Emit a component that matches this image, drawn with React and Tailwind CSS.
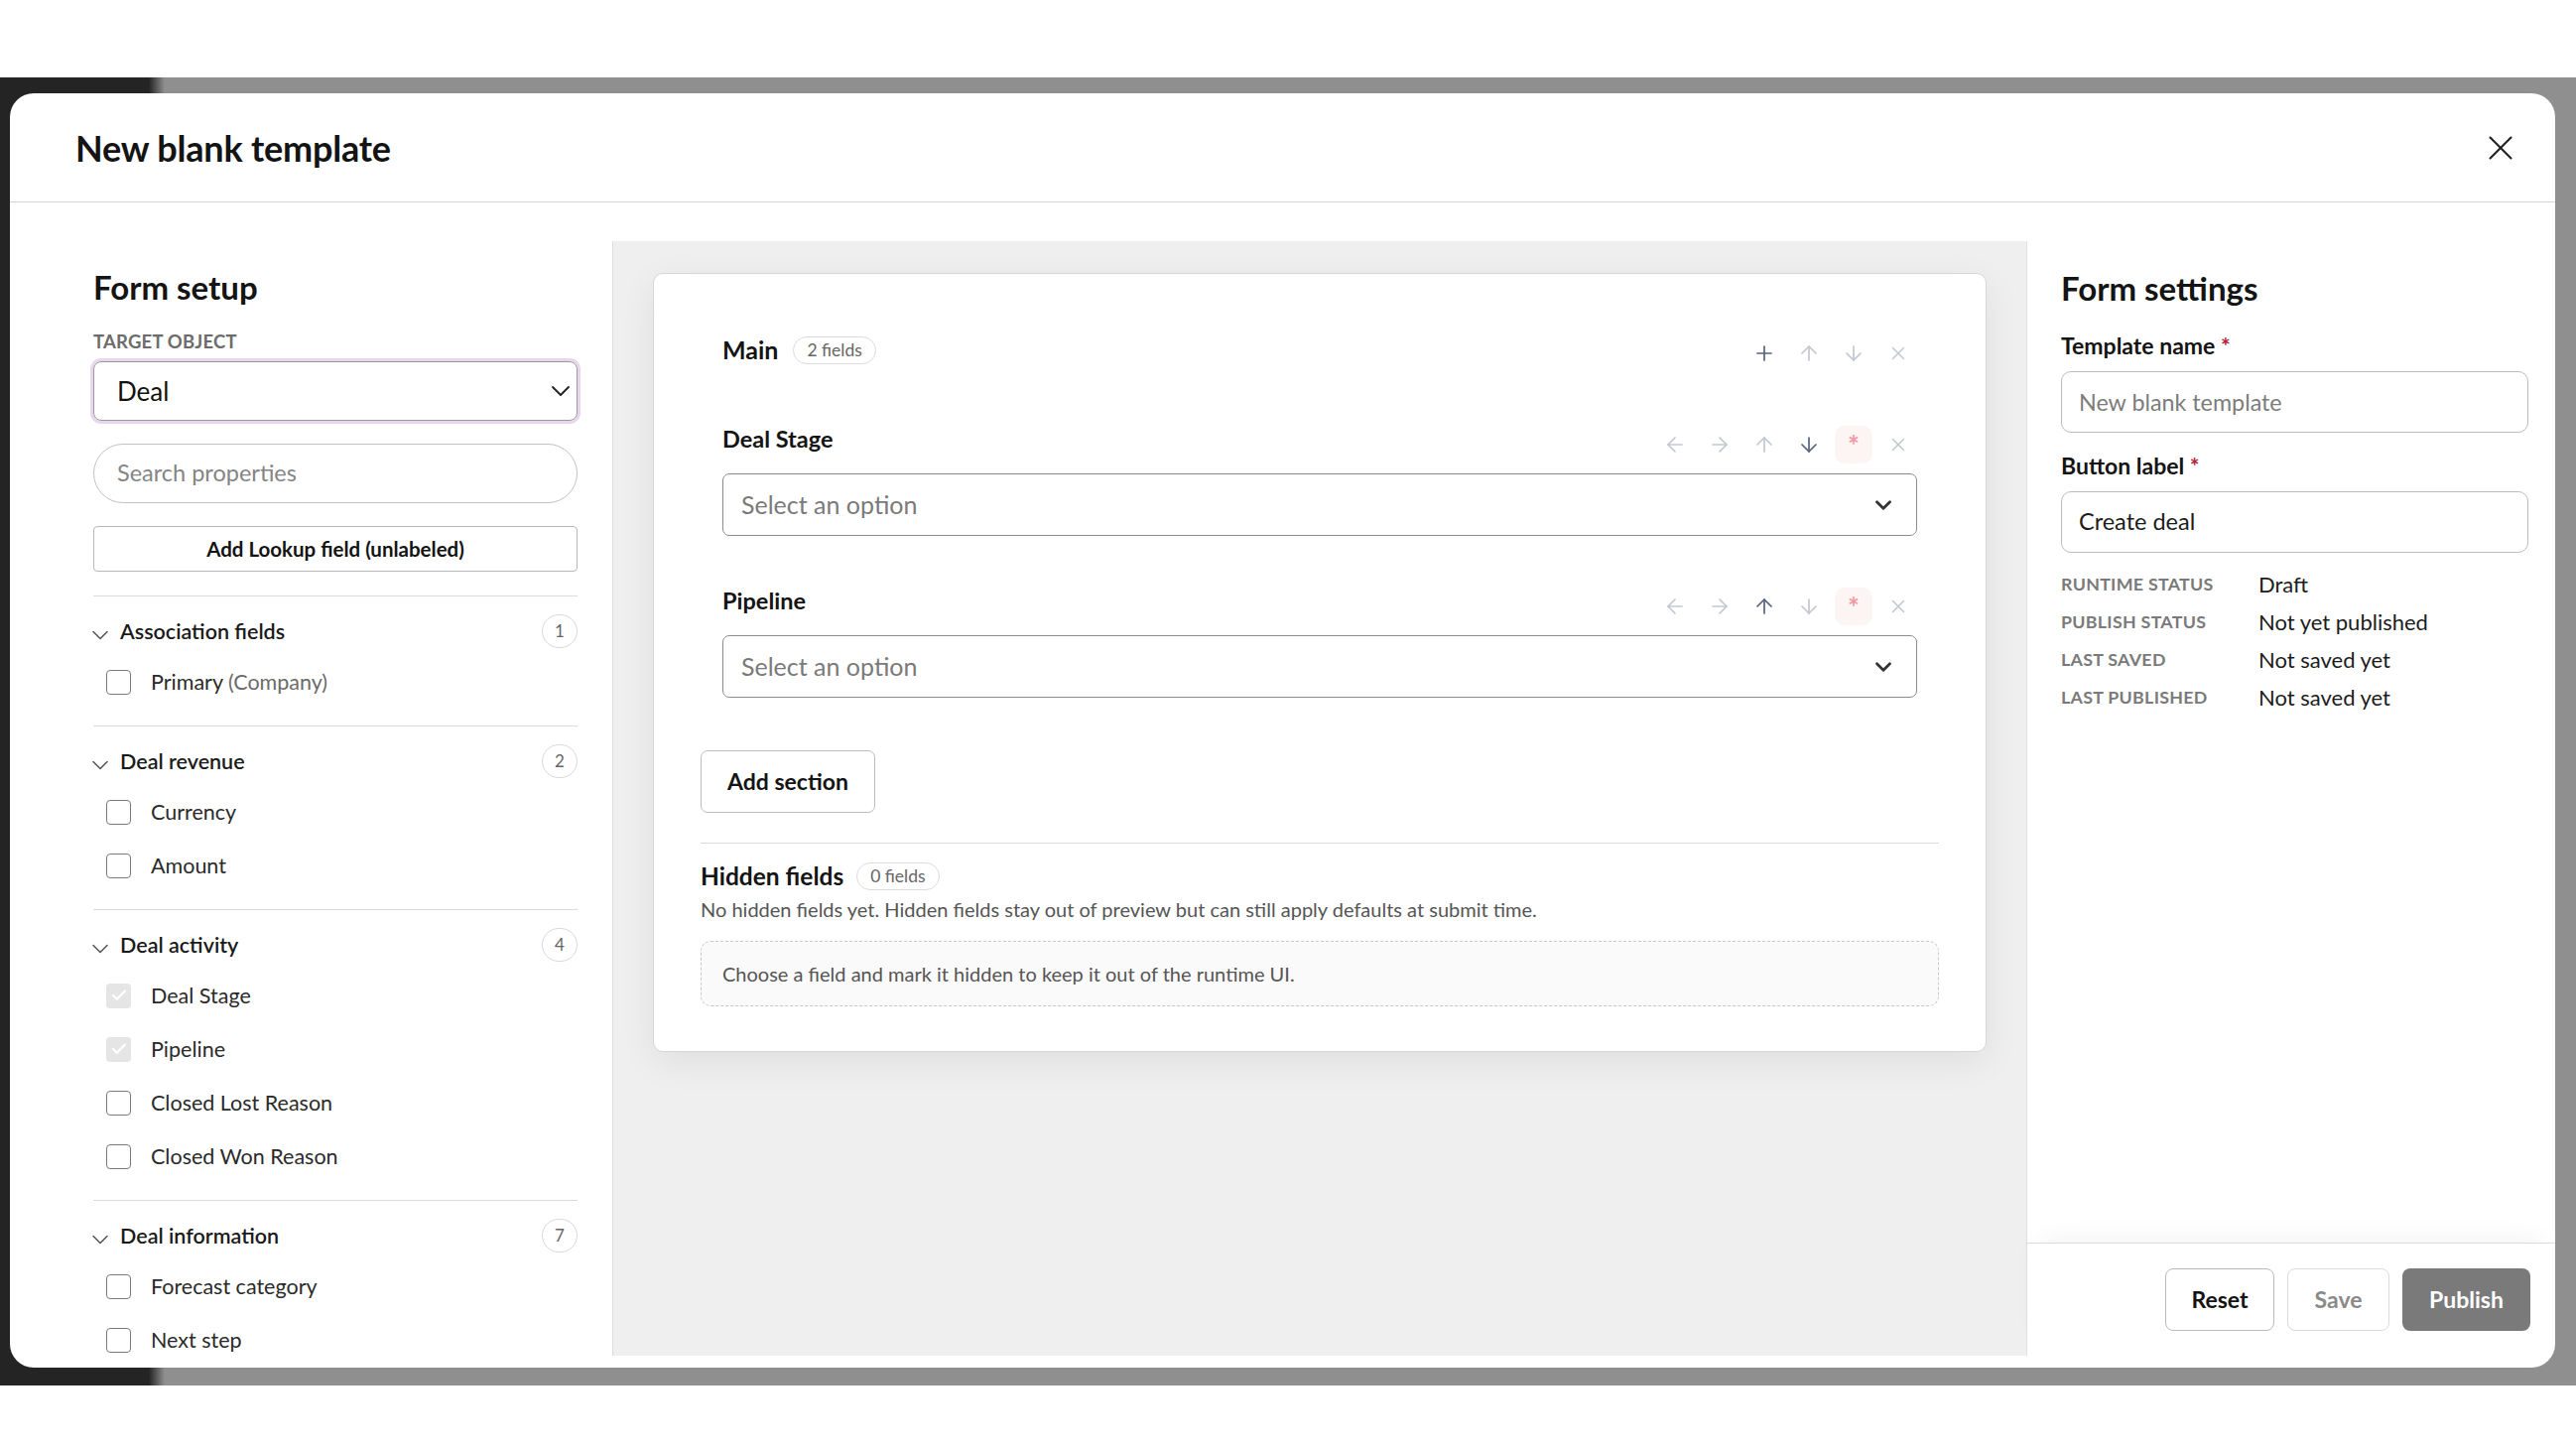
import React from 'react';
import { ArrowLeft, ArrowRight, ArrowUp, ArrowDown, Plus, X, ChevronDown, Check } from 'lucide-react';

const groups = [
  { title: 'Association fields', count: 1, items: [{ label: 'Primary', note: '(Company)' }] },
  { title: 'Deal revenue', count: 2, items: [{ label: 'Currency' }, { label: 'Amount' }] },
  {
    title: 'Deal activity',
    count: 4,
    items: [
      { label: 'Deal Stage', locked: true },
      { label: 'Pipeline', locked: true },
      { label: 'Closed Lost Reason' },
      { label: 'Closed Won Reason' },
    ],
  },
  {
    title: 'Deal information',
    count: 7,
    items: [
      { label: 'Forecast category' },
      { label: 'Next step' },
      { label: 'Deal type' },
      { label: 'Priority' },
      { label: 'Close date' },
      { label: 'Deal owner' },
      { label: 'Deal description' },
    ],
  },
];

const statusRows = [
  ['Runtime status', 'Draft'],
  ['Publish status', 'Not yet published'],
  ['Last saved', 'Not saved yet'],
  ['Last published', 'Not saved yet'],
];

const light = 'text-[#c2c7d1]';
const dark = 'text-[#55627f]';

const IconBtn = ({ children, tone = light }) => (
  <span className={`w-[38px] h-[38px] flex items-center justify-center ${tone}`}>{children}</span>
);

const RequiredBtn = () => (
  <span className="w-[38px] h-[38px] flex items-start justify-center rounded-[10px] bg-[#fdf4f4] text-[#ef9ca4] text-[28px] font-bold leading-[38px]">
    *
  </span>
);

const Pill = ({ children }) => (
  <span className="h-[28px] px-[13px] flex items-center rounded-full border border-[#dcdcdc] text-[17.5px] text-[#666]">
    {children}
  </span>
);

const FieldRow = ({ label, upDark, downDark, className }) => (
  <div className={className}>
    <div className="h-[38px] flex items-center justify-between">
      <span className="text-[23.5px] font-bold text-[#141414] mb-[10px]">{label}</span>
      <div className="flex gap-[7px]">
        <IconBtn><ArrowLeft size={24} strokeWidth={1.7} /></IconBtn>
        <IconBtn><ArrowRight size={24} strokeWidth={1.7} /></IconBtn>
        <IconBtn tone={upDark ? dark : light}><ArrowUp size={24} strokeWidth={1.7} /></IconBtn>
        <IconBtn tone={downDark ? dark : light}><ArrowDown size={24} strokeWidth={1.7} /></IconBtn>
        <RequiredBtn />
        <IconBtn><X size={22} strokeWidth={1.7} /></IconBtn>
      </div>
    </div>
    <div className="mt-[10px] h-[63px] border border-[#8c8c8c] rounded-[7px] flex items-center justify-between pl-[18px] pr-[20px]">
      <span className="text-[25px] text-[#7a7a7a]">Select an option</span>
      <ChevronDown size={26} strokeWidth={2.6} className="text-[#333]" />
    </div>
  </div>
);

const Checkbox = ({ locked }) =>
  locked ? (
    <span className="w-[25px] h-[25px] rounded-[4px] bg-[#e5e5e5] flex items-center justify-center text-white">
      <Check size={18} strokeWidth={3} />
    </span>
  ) : (
    <span className="w-[25px] h-[25px] rounded-[4px] border-[1.5px] border-[#7a7a7a] bg-white" />
  );

export default function App() {
  return (
    <div className="w-[2596px] h-[1460px] bg-white pt-[78px] overflow-hidden font-[family-name:Lato,sans-serif] text-[#141414]">
      <div className="h-[1318px] pt-[16px] bg-[linear-gradient(90deg,#242424_150px,#8f8f8f_166px)]">
        <div className="ml-[10px] w-[2565px] h-[1284px] bg-white rounded-[24px] flex flex-col overflow-hidden">
          {/* Header */}
          <div className="h-[110px] shrink-0 border-b border-[#d4d4d4] flex items-center justify-between pl-[66px] pr-[34px]">
            <h1 className="text-[36px] font-bold tracking-[-0.2px]">New blank template</h1>
            <X size={42} strokeWidth={1.2} className="text-[#222]" />
          </div>

          {/* Body */}
          <div className="flex-1 min-h-0 flex pt-[39px] pb-[12px]">
            {/* Form setup */}
            <div className="w-[608px] shrink-0 border-r border-[#dcdcdc] overflow-hidden pl-[84px] pr-[35px] pt-[28px]">
              <h2 className="text-[33px] font-bold leading-[36px]">Form setup</h2>
              <div className="mt-[27px] text-[18.5px] font-bold text-[#6c6c6c] leading-[20px] tracking-[0.2px]">TARGET OBJECT</div>
              <div className="mt-[10px] h-[60px] rounded-[8px] border border-[#9a9a9a] ring-[3px] ring-[#e7d6ee] flex items-center justify-between pl-[23px] pr-0">
                <span className="text-[26px] text-[#111]">Deal</span>
                <ChevronDown size={32} strokeWidth={1.4} className="text-[#222]" />
              </div>
              <div className="mt-[23px] h-[60px] rounded-full border border-[#c2c2c2] flex items-center pl-[23px]">
                <span className="text-[23.5px] text-[#858585]">Search properties</span>
              </div>
              <div className="mt-[23px] h-[46px] rounded-[4px] border border-[#b8b8b8] flex items-center justify-center">
                <span className="text-[20.5px] font-bold text-[#141414]">Add Lookup field (unlabeled)</span>
              </div>

              <div className="mt-[24px]">
                {groups.map((g) => (
                  <div key={g.title} className="border-t border-[#dadada]">
                    <div className="mt-[17px] h-[36px] flex items-center justify-between">
                      <div className="flex items-center">
                        <ChevronDown size={28} strokeWidth={1.3} className="text-[#555] mt-[8px] -ml-[7px]" />
                        <span className="ml-[6px] text-[21.5px] font-semibold text-[#1a1a1a]">{g.title}</span>
                      </div>
                      <span className="w-[36px] h-[34px] rounded-full border border-[#d9d9d9] flex items-center justify-center text-[17px] text-[#666]">
                        {g.count}
                      </span>
                    </div>
                    <div className="mt-[6px] pb-[17px]">
                      {g.items.map((it) => (
                        <div key={it.label} className="h-[54px] flex items-center pl-[13px]">
                          <Checkbox locked={it.locked} />
                          <span className="ml-[20px] text-[21.5px] text-[#2a2a2a]">
                            {it.label}
                            {it.note && <span className="text-[#6a6a6a]"> {it.note}</span>}
                          </span>
                        </div>
                      ))}
                    </div>
                  </div>
                ))}
              </div>
            </div>

            {/* Canvas */}
            <div className="flex-1 min-w-0 bg-[#efefef] px-[40px] pt-[32px] overflow-hidden">
              <div className="bg-white border border-[#d6d6d6] rounded-[10px] shadow-[0_10px_36px_rgba(0,0,0,0.07)] px-[47px] pt-[58px] pb-[45px]">
                <div className="px-[22px]">
                  <div className="h-[38px] flex items-center justify-between">
                    <div className="flex items-center gap-[15px]">
                      <span className="text-[25px] font-bold">Main</span>
                      <Pill>2 fields</Pill>
                    </div>
                    <div className="flex gap-[7px] mt-[6px]">
                      <IconBtn tone={dark}><Plus size={24} strokeWidth={1.7} /></IconBtn>
                      <IconBtn><ArrowUp size={24} strokeWidth={1.7} /></IconBtn>
                      <IconBtn><ArrowDown size={24} strokeWidth={1.7} /></IconBtn>
                      <IconBtn><X size={22} strokeWidth={1.7} /></IconBtn>
                    </div>
                  </div>
                  <FieldRow label="Deal Stage" downDark className="mt-[57px]" />
                  <FieldRow label="Pipeline" upDark className="mt-[52px]" />
                </div>

                <button className="mt-[53px] h-[63px] px-[26px] rounded-[7px] border border-[#bdbdbd] text-[23px] font-bold text-[#141414]">
                  Add section
                </button>

                <div className="mt-[30px] border-t border-[#d9d9d9]" />

                <div className="mt-[18px] h-[30px] flex items-center gap-[13px]">
                  <span className="text-[24.5px] font-bold">Hidden fields</span>
                  <Pill>0 fields</Pill>
                </div>
                <p className="mt-[6px] text-[20px] leading-[24px] text-[#555]">
                  No hidden fields yet. Hidden fields stay out of preview but can still apply defaults at submit time.
                </p>
                <div className="mt-[20px] h-[66px] rounded-[10px] border border-dashed border-[#c8c8c8] bg-[#fafafa] flex items-center px-[21px]">
                  <span className="text-[20px] text-[#555]">Choose a field and mark it hidden to keep it out of the runtime UI.</span>
                </div>
              </div>
            </div>

            {/* Form settings */}
            <div className="w-[533px] shrink-0 border-l border-[#e0e0e0] flex flex-col">
              <div className="flex-1 pl-[34px] pr-[27px] pt-[29px]">
                <h2 className="text-[33px] font-bold leading-[36px]">Form settings</h2>
                <div className="mt-[27px] text-[23px] font-bold leading-[26px]">
                  Template name <span className="text-[#b3203c]">*</span>
                </div>
                <div className="mt-[13px] h-[62px] rounded-[10px] border border-[#bcbcbc] flex items-center pl-[17px]">
                  <span className="text-[23.3px] text-[#7c7c7c]">New blank template</span>
                </div>
                <div className="mt-[20px] text-[23px] font-bold leading-[26px]">
                  Button label <span className="text-[#b3203c]">*</span>
                </div>
                <div className="mt-[13px] h-[62px] rounded-[10px] border border-[#bcbcbc] flex items-center pl-[17px]">
                  <span className="text-[23.5px] text-[#1c1c1c]">Create deal</span>
                </div>
                <div className="mt-[12px]">
                  {statusRows.map(([k, v]) => (
                    <div key={k} className="h-[38px] flex items-center">
                      <span className="w-[199px] shrink-0 text-[17.8px] font-bold uppercase tracking-[0.3px] text-[#7a7a7a]">{k}</span>
                      <span className="text-[22px] text-[#1c1c1c]">{v}</span>
                    </div>
                  ))}
                </div>
              </div>
              <div className="h-[114px] shrink-0 border-t border-[#dcdcdc] shadow-[0_-14px_28px_-14px_rgba(0,0,0,0.07)] flex items-center justify-end gap-[13px] pr-[25px]">
                <button className="h-[63px] w-[110px] rounded-[8px] border border-[#bababa] text-[23px] font-bold text-[#141414]">Reset</button>
                <button className="h-[63px] w-[103px] rounded-[8px] border border-[#dadada] text-[23px] font-bold text-[#8a8a8a]">Save</button>
                <button className="h-[63px] w-[129px] rounded-[8px] bg-[#7a7a7a] text-[23px] font-bold text-white">Publish</button>
              </div>
            </div>
          </div>
        </div>
      </div>
    </div>
  );
}
